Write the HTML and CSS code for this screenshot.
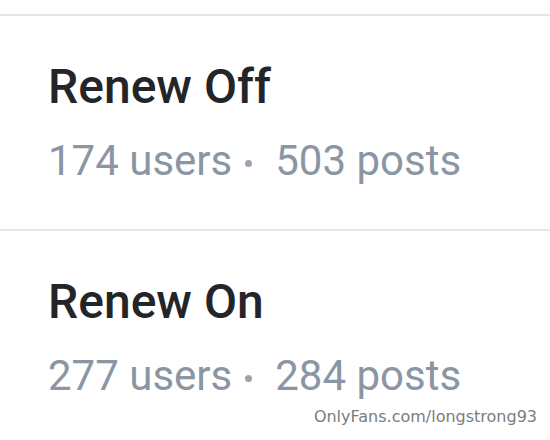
FILE: index.html
```html
<!DOCTYPE html>
<html>
<head>
<meta charset="utf-8">
<link rel="stylesheet" href="styles.css">
</head>
<body>
<div class="page">
  <div class="top-space"></div>
  <section class="list">
    <div class="item">
      <div class="title">Renew Off</div>
      <div class="meta"><span>174 users</span><span class="dot"></span><span>503 posts</span></div>
    </div>
    <div class="item">
      <div class="title">Renew On</div>
      <div class="meta"><span>277 users</span><span class="dot"></span><span>284 posts</span></div>
    </div>
  </section>
  <div class="watermark">OnlyFans.com/longstrong93</div>
</div>
</body>
</html>
```
FILE: styles.css
```css
html, body {
  margin: 0;
  padding: 0;
  background: #ffffff;
}
.page {
  position: relative;
  width: 550px;
  height: 440px;
  overflow: hidden;
  font-family: Roboto, "Liberation Sans", sans-serif;
}
.top-space {
  height: 14px;
}
.item {
  border-top: 2px solid #e6e6e8;
  padding: 44px 0 43px 48px;
}
.title {
  font-size: 48px;
  line-height: 54px;
  font-weight: 500;
  color: #242529;
}
.meta {
  margin-top: 22px;
  font-size: 42px;
  line-height: 50px;
  color: #8a96a3;
  display: flex;
  align-items: center;
  white-space: nowrap;
}
.dot {
  width: 7px;
  height: 7px;
  border-radius: 50%;
  background: #9aa4ae;
  margin: 4px 23px 0 13px;
}
.watermark {
  position: absolute;
  right: 13px;
  bottom: 14px;
  font-family: "DejaVu Sans", sans-serif;
  font-size: 16px;
  color: #7c7c7c;
  text-shadow: 0 0 2px #ffffff;
}
```
